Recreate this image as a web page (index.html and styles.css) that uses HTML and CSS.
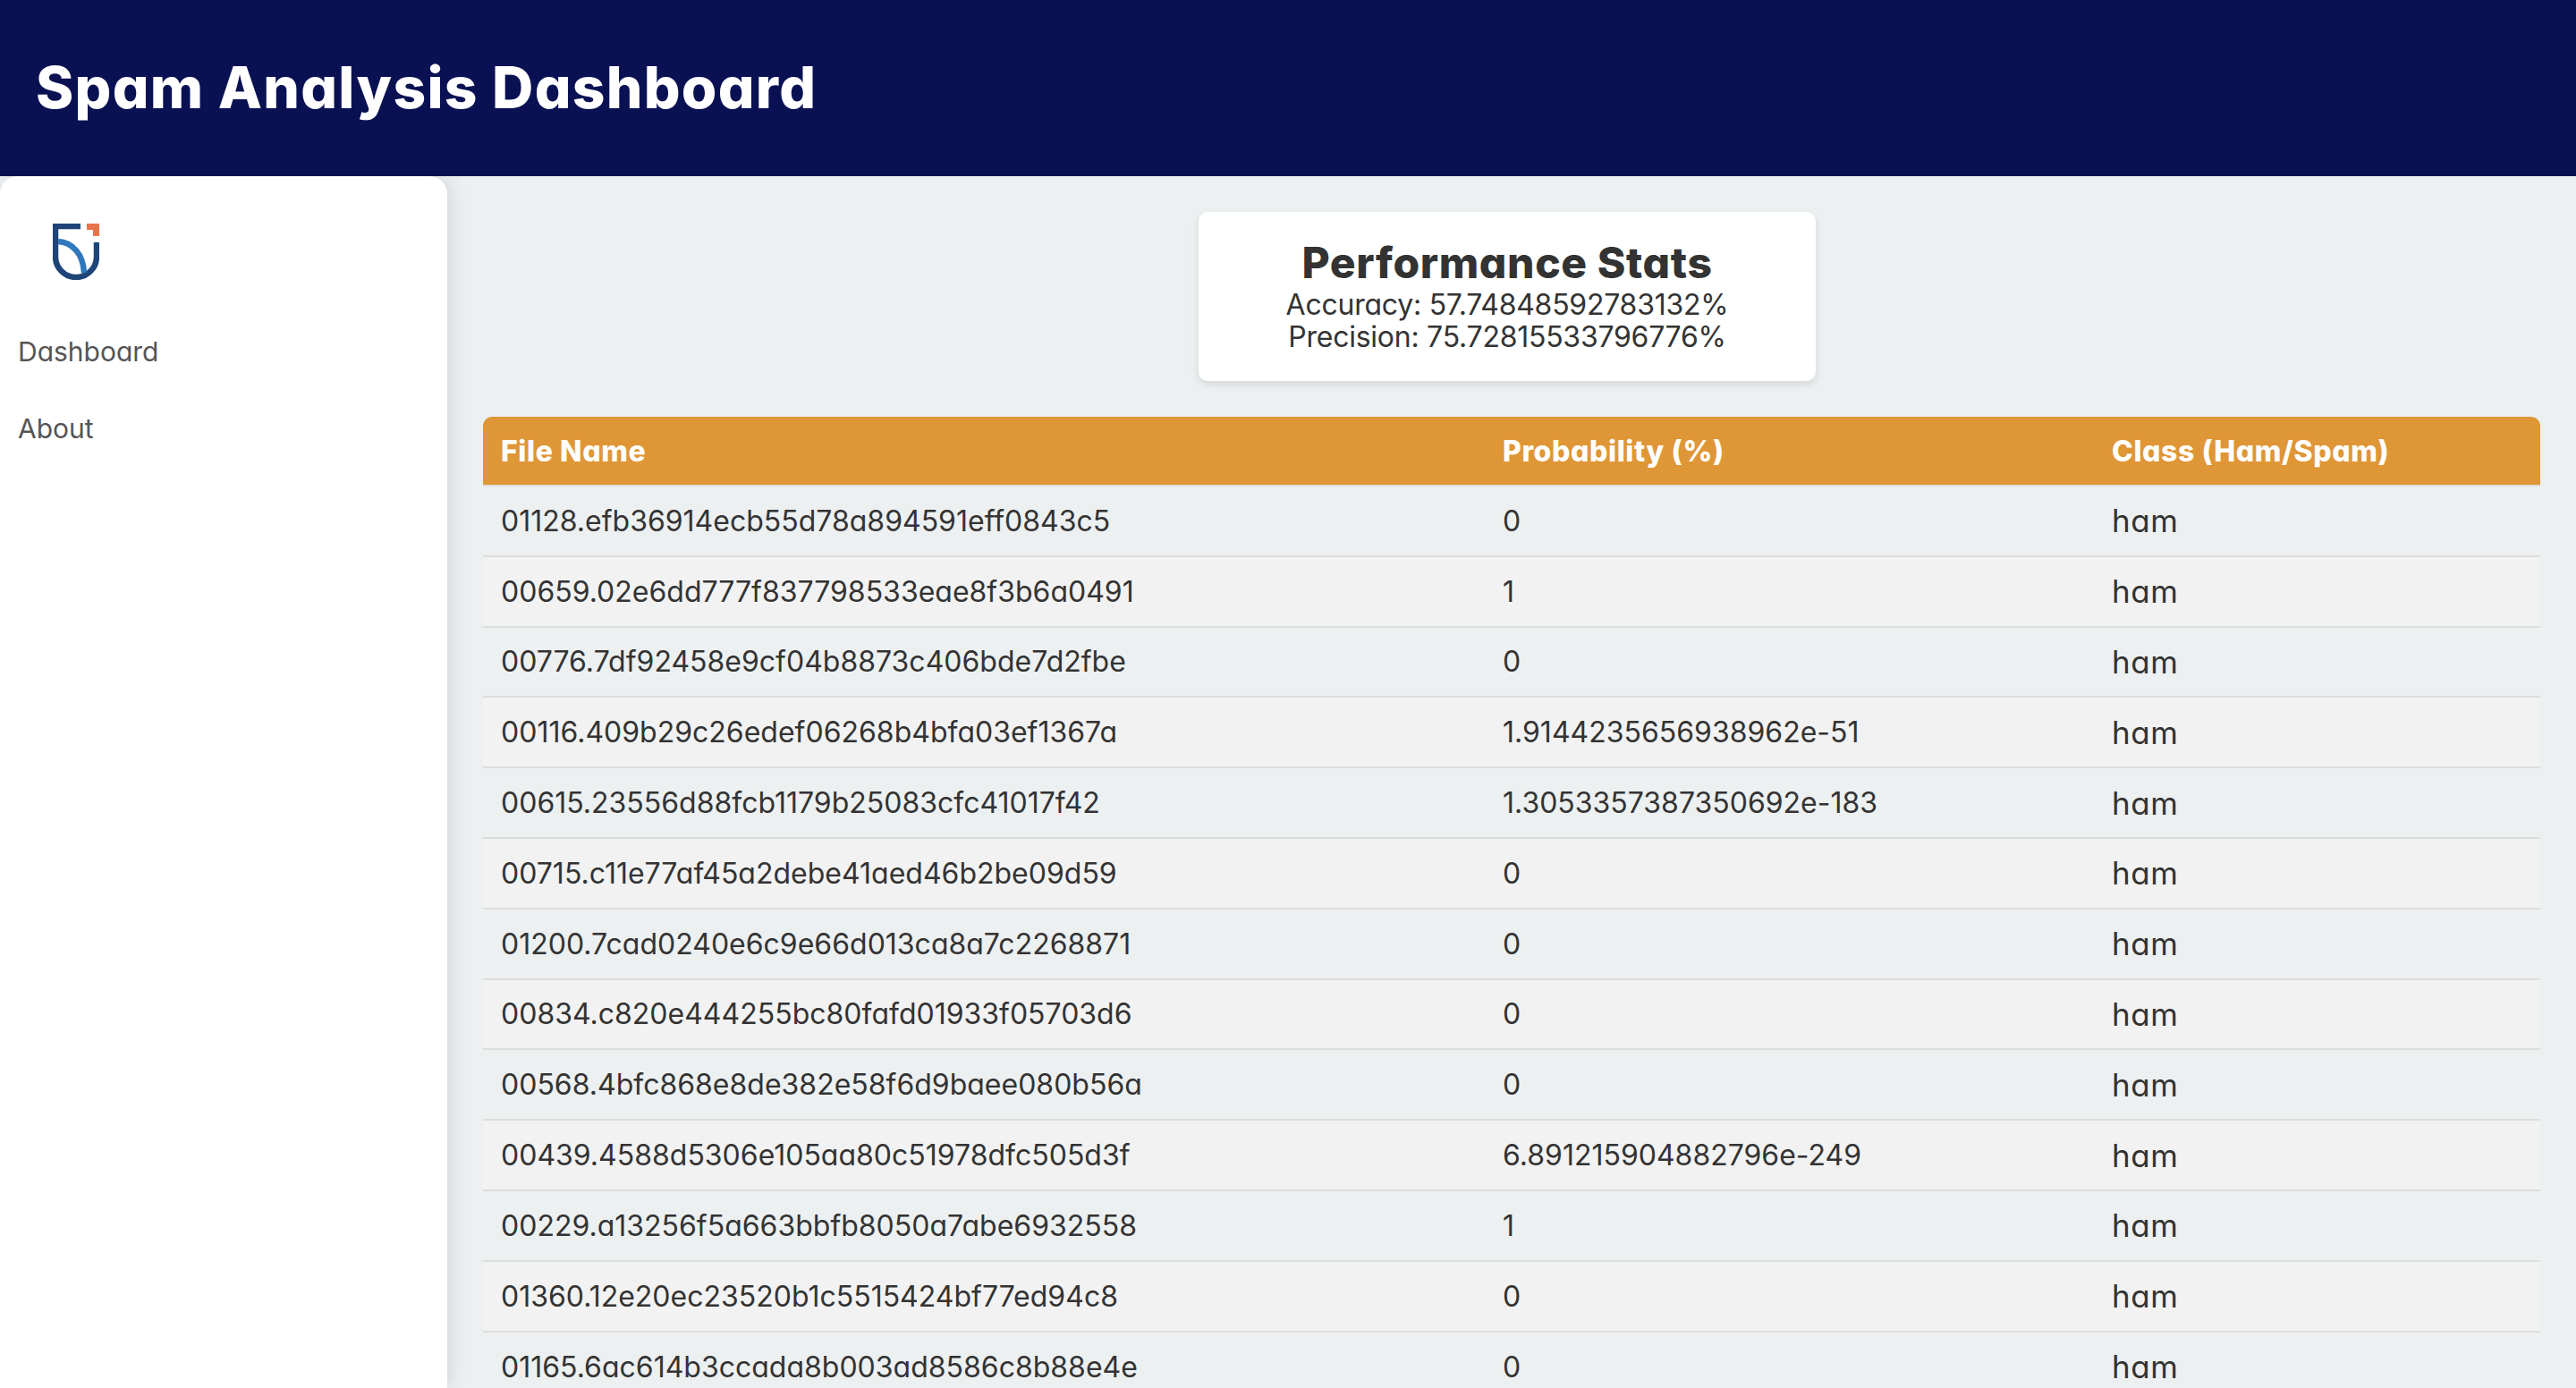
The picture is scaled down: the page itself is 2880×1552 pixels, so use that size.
FILE: index.html
```html
<!DOCTYPE html>
<html lang="en">
<head>
  <meta charset="UTF-8" />
  <meta name="viewport" content="width=device-width, initial-scale=1.0" />
  <title>Spam Analysis Dashboard</title>
  <link rel="stylesheet" href="styles.css">
</head>
<body>
  <header class="topbar">
    <h1>Spam Analysis Dashboard</h1>
  </header>

  <div class="layout">
    <nav class="sidebar">
      <svg class="logo" viewBox="0 0 52 63" aria-label="Logo">
        <path d="M31 3H3V37A23 23 0 0 0 49 37V21" fill="none" stroke="#1f4477" stroke-width="6.5"/>
        <path d="M6 20C22 21 34 34 35 55" fill="none" stroke="#2f78bb" stroke-width="6.5"/>
        <path d="M38 0H52V14H45V7H38Z" fill="#e8744a"/>
      </svg>
      <a href="#">Dashboard</a>
      <a href="#">About</a>
    </nav>

    <main class="content">
      <section class="stats">
        <h2>Performance Stats</h2>
        <p>Accuracy: 57.74848592783132%</p>
        <p>Precision: 75.72815533796776%</p>
      </section>

      <table class="results">
        <thead>
          <tr><th class="col-file">File Name</th><th class="col-prob">Probability (%)</th><th>Class (Ham/Spam)</th></tr>
        </thead>
        <tbody>
          <tr><td>01128.efb36914ecb55d78a894591eff0843c5</td><td>0</td><td>ham</td></tr>
          <tr><td>00659.02e6dd777f837798533eae8f3b6a0491</td><td>1</td><td>ham</td></tr>
          <tr><td>00776.7df92458e9cf04b8873c406bde7d2fbe</td><td>0</td><td>ham</td></tr>
          <tr><td>00116.409b29c26edef06268b4bfa03ef1367a</td><td>1.9144235656938962e-51</td><td>ham</td></tr>
          <tr><td>00615.23556d88fcb1179b25083cfc41017f42</td><td>1.3053357387350692e-183</td><td>ham</td></tr>
          <tr><td>00715.c11e77af45a2debe41aed46b2be09d59</td><td>0</td><td>ham</td></tr>
          <tr><td>01200.7cad0240e6c9e66d013ca8a7c2268871</td><td>0</td><td>ham</td></tr>
          <tr><td>00834.c820e444255bc80fafd01933f05703d6</td><td>0</td><td>ham</td></tr>
          <tr><td>00568.4bfc868e8de382e58f6d9baee080b56a</td><td>0</td><td>ham</td></tr>
          <tr><td>00439.4588d5306e105aa80c51978dfc505d3f</td><td>6.891215904882796e-249</td><td>ham</td></tr>
          <tr><td>00229.a13256f5a663bbfb8050a7abe6932558</td><td>1</td><td>ham</td></tr>
          <tr><td>01360.12e20ec23520b1c5515424bf77ed94c8</td><td>0</td><td>ham</td></tr>
          <tr><td>01165.6ac614b3ccada8b003ad8586c8b88e4e</td><td>0</td><td>ham</td></tr>
        </tbody>
      </table>
    </main>
  </div>
</body>
</html>
```

FILE: styles.css
```css
:root {
  --navy: #0a1153;
  --orange: #df9636;
  --page: #ecf0f1;
  --stripe: #f2f2f2;
  --line: #dddddd;
  --text: #333333;
}

* {
  box-sizing: border-box;
  margin: 0;
  padding: 0;
}

body {
  height: 100vh;
  overflow: hidden;
  display: flex;
  flex-direction: column;
  background: var(--page);
  color: var(--text);
  font-family: Inter, "Liberation Sans", sans-serif;
  font-feature-settings: "cv11";
}

.topbar {
  height: 197px;
  flex: none;
  display: flex;
  align-items: center;
  padding: 0 0 2px 40px;
  background: var(--navy);
}

.topbar h1 {
  color: #fff;
  font-size: 64px;
  font-weight: 800;
  letter-spacing: 1.3px;
}

.layout {
  flex: 1;
  min-height: 0;
  display: flex;
}

.sidebar {
  width: 500px;
  flex: none;
  display: flex;
  flex-direction: column;
  padding: 53px 20px 0;
  background: #fff;
  border-radius: 20px 20px 0 0;
  box-shadow: 4px 0 20px rgba(0, 0, 0, 0.1);
}

.logo {
  width: 52px;
  height: 63px;
  margin: 0 0 65px 39px;
}

.sidebar a {
  margin-bottom: 56px;
  color: #555;
  font-size: 30px;
  line-height: 30px;
  text-decoration: none;
}

.content {
  flex: 1;
  min-width: 0;
  display: flex;
  flex-direction: column;
  align-items: center;
  padding: 40px 40px 0;
}

.stats {
  width: 690px;
  height: 189px;
  flex: none;
  padding-top: 28px;
  margin: 0 10px 40px 0;
  background: #fff;
  border-radius: 10px;
  box-shadow: 0 4px 8px rgba(0, 0, 0, 0.1);
  text-align: center;
}

.stats h2 {
  font-size: 48px;
  font-weight: 800;
  line-height: 58px;
  letter-spacing: 0.6px;
}

.stats p {
  font-size: 32px;
  line-height: 36px;
  letter-spacing: -0.25px;
}

.results {
  width: 100%;
  flex: none;
  border-collapse: collapse;
  table-layout: fixed;
}

.results th {
  height: 77px;
  padding: 0 20px;
  background: var(--orange);
  color: #fff;
  font-size: 32px;
  font-weight: 800;
  letter-spacing: 0.6px;
  text-align: left;
}

.results th:first-child {
  border-top-left-radius: 10px;
}

.results th:last-child {
  border-top-right-radius: 10px;
}

.col-file {
  width: 1120px;
}

.col-prob {
  width: 681px;
}

.results td {
  height: 78.8px;
  padding: 0 20px;
  border-top: 2px solid var(--line);
  font-size: 32px;
}

.results td:last-child {
  font-size: 35px;
  letter-spacing: 0.5px;
}

.results tbody tr:nth-child(even) {
  background: var(--stripe);
}
```
